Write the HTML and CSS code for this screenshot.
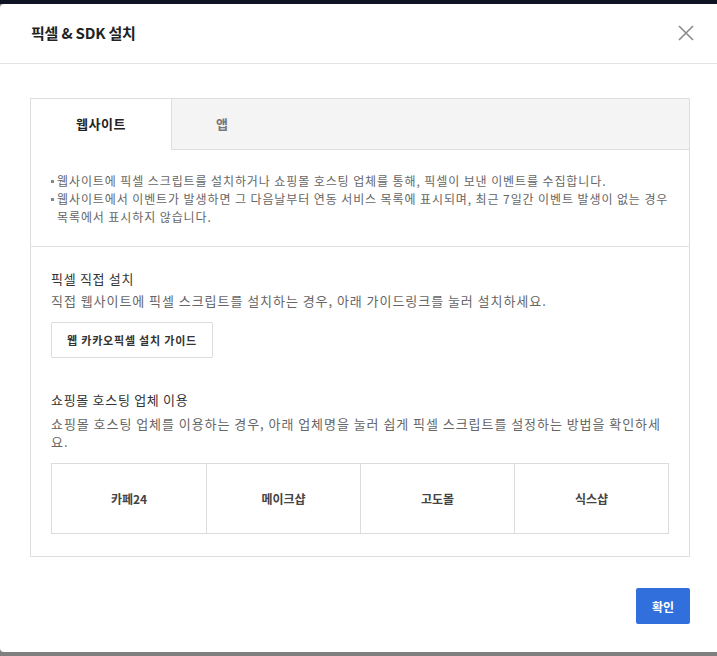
FILE: index.html
```html
<!DOCTYPE html>
<html>
<head>
    <title>픽셀 &amp; SDK 설치</title>
    <link rel="stylesheet" href="styles.css">
</head>
<body>
    <div class="overlay-top"></div>
    <div class="modal">
        <div class="modal-header">
            <h1>픽셀 &amp; SDK 설치</h1>
            <button class="close-button" aria-label="닫기">
                <svg width="16" height="16" viewBox="0 0 16 16">
                    <path d="M1 1L15 15M15 1L1 15" stroke="#8a8a8a" stroke-width="1.6" fill="none"/>
                </svg>
            </button>
        </div>

        <div class="modal-body">
            <div class="panel">
                <div class="tabs">
                    <div class="tab active">웹사이트</div>
                    <div class="tab">앱</div>
                </div>

                <ul class="notice">
                    <li>웹사이트에 픽셀 스크립트를 설치하거나 쇼핑몰 호스팅 업체를 통해, 픽셀이 보낸 이벤트를 수집합니다.</li>
                    <li>웹사이트에서 이벤트가 발생하면 그 다음날부터 연동 서비스 목록에 표시되며, 최근 7일간 이벤트 발생이 없는 경우 목록에서 표시하지 않습니다.</li>
                </ul>

                <div class="section">
                    <h2>픽셀 직접 설치</h2>
                    <p>직접 웹사이트에 픽셀 스크립트를 설치하는 경우, 아래 가이드링크를 눌러 설치하세요.</p>
                    <button class="guide-button">웹 카카오픽셀 설치 가이드</button>

                    <h2 class="second">쇼핑몰 호스팅 업체 이용</h2>
                    <p>쇼핑몰 호스팅 업체를 이용하는 경우, 아래 업체명을 눌러 쉽게 픽셀 스크립트를 설정하는 방법을 확인하세요.</p>
                    <div class="hosts">
                        <a href="#">카페24</a>
                        <a href="#">메이크샵</a>
                        <a href="#">고도몰</a>
                        <a href="#">식스샵</a>
                    </div>
                </div>
            </div>
        </div>

        <div class="modal-footer">
            <button class="confirm-button">확인</button>
        </div>
    </div>
</body>
</html>
```

FILE: styles.css
```css
body {
    margin: 0;
    background-color: #7f7f7f;
    font-family: "Noto Sans CJK KR", "Noto Sans", sans-serif;
    color: #333;
    overflow: hidden;
}

.overlay-top {
    height: 4px;
    background-color: #0f1424;
}

.modal {
    width: 740px;
    height: 648px;
    background-color: #fff;
    border-radius: 4px 0 0 4px;
    display: flex;
    flex-direction: column;
}

.modal-header {
    height: 60px;
    box-sizing: border-box;
    border-bottom: 1px solid #e3e3e3;
    display: flex;
    align-items: center;
    justify-content: space-between;
    padding: 0 0 0 31px;
    width: 717px;
}

.modal-header h1 {
    margin: 0;
    font-size: 15px;
    font-weight: bold;
    color: #222;
    line-height: 20px;
    margin-top: -2px;
    letter-spacing: -0.2px;
}

.close-button {
    background: none;
    border: none;
    padding: 0;
    margin-right: 23px;
    margin-top: -2px;
    width: 16px;
    height: 16px;
    cursor: pointer;
}

.modal-body {
    padding: 34px 0 0 30px;
    width: 660px;
}

.panel {
    border: 1px solid #dedede;
}

.tabs {
    display: flex;
    background-color: #f4f4f4;
    border-bottom: 1px solid #dedede;
    height: 50px;
}

.tab {
    padding: 0 44px;
    font-size: 13px;
    font-weight: bold;
    color: #777;
    line-height: 50px;
    letter-spacing: 0.6px;
}

.tab.active {
    width: 52px;
    text-align: center;
    background-color: #fff;
    color: #222;
    border-right: 1px solid #dedede;
    height: 51px;
}

.notice {
    margin: 0;
    padding: 22px 20px 20px 20px;
    list-style: none;
    border-bottom: 1px solid #e3e3e3;
}

.notice li {
    font-size: 12px;
    line-height: 18px;
    color: #666;
    padding-left: 6px;
    position: relative;
    letter-spacing: 0.9px;
    word-break: keep-all;
}

.notice li::before {
    content: "";
    position: absolute;
    left: 0;
    top: 8px;
    width: 3px;
    height: 3px;
    background-color: #888;
}

.section {
    padding: 22px 20px 22px 20px;
}

.section h2 {
    margin: 0;
    font-size: 13px;
    font-weight: normal;
    line-height: 20px;
    color: #333;
    letter-spacing: 0.7px;
}

.section h2.second {
    margin-top: 32px;
}

.section p {
    margin: 3px 0 0 0;
    font-size: 13px;
    line-height: 18px;
    color: #666;
    letter-spacing: 0.95px;
}

.section h2.second + p {
    margin-top: 5px;
}

.guide-button {
    margin-top: 12px;
    height: 36px;
    padding: 0 15px;
    border: 1px solid #dcdcdc;
    border-radius: 2px;
    background-color: #fff;
    font-family: inherit;
    font-size: 11px;
    font-weight: bold;
    color: #333;
    letter-spacing: 0.8px;
    cursor: pointer;
}

.hosts {
    margin-top: 12px;
    display: grid;
    grid-template-columns: repeat(4, 1fr);
    border: 1px solid #dcdcdc;
}

.hosts a {
    height: 69px;
    line-height: 69px;
    text-align: center;
    font-size: 12px;
    font-weight: bold;
    color: #444;
    text-decoration: none;
    border-left: 1px solid #dcdcdc;
}

.hosts a:first-child {
    border-left: none;
}

.modal-footer {
    width: 660px;
    padding: 31px 0 0 30px;
    display: flex;
    justify-content: flex-end;
}

.confirm-button {
    width: 54px;
    height: 36px;
    border: none;
    border-radius: 2px;
    background-color: #3170dc;
    color: #fff;
    font-family: inherit;
    font-size: 12px;
    font-weight: bold;
    cursor: pointer;
}
```
